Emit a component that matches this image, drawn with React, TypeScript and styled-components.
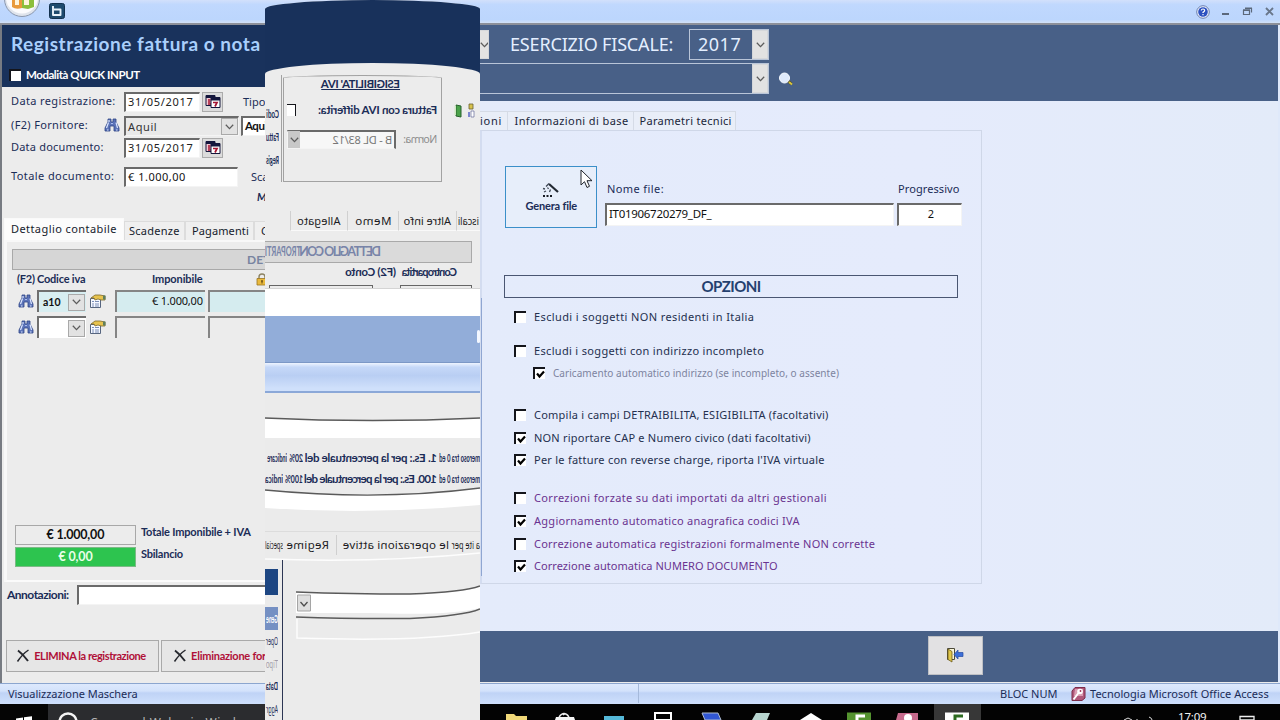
import React, { useLayoutEffect, useRef, useState } from 'react';
import styled, { createGlobalStyle, css } from 'styled-components';

const NAVY = '#1b2c57';

interface FitTextProps {
    w?: number;
    size?: number;
    color?: string;
    bold?: boolean;
    underline?: boolean;
    italic?: boolean;
    squeeze?: boolean;
    children: string;
}

const FitText: React.FC<FitTextProps> = ({ w, size = 11, color = NAVY, bold, underline, italic, squeeze, children }) => {
    const ref = useRef<HTMLSpanElement>(null);
    const [fit, setFit] = useState<React.CSSProperties>({});

    useLayoutEffect(() => {
        if (!w || !ref.current) return;
        const natural = ref.current.offsetWidth;
        if (squeeze) {
            setFit({ transform: `scaleX(${w / natural})` });
        } else {
            setFit({ letterSpacing: `${(w - natural) / children.length}px` });
        }
    }, []);

    return (
        <TextBox $w={w} $size={size} $color={color} $bold={bold} $underline={underline} $italic={italic}>
            <TextRun ref={ref} style={fit}>{children}</TextRun>
        </TextBox>
    );
};

const Binoculars = () => (
    <svg width="16" height="14" viewBox="0 0 16 14">
        <path d="M4 1h3v3h2V1h3v3l3 6v3h-5V8H6v5H1v-3l3-6z" fill="#5b73b8" stroke="#2f4585" strokeWidth=".8" />
        <path d="M4.5 4.5 2.5 10M12 4.5l1.5 5.5M3 12h1.5M12 12h1.5M5 2v2" stroke="#dce6ff" strokeWidth="1.2" />
        <path d="M7 5.5h2" stroke="#a9bbf0" />
    </svg>
);

const Properties = () => (
    <svg width="17" height="15" viewBox="0 0 17 15">
        <path d="M1.5 4.5h10v9h-10z" fill="#f5f8ff" stroke="#56657f" />
        <path d="M3 7.5h2M6 7.5h4M3 10h2M6 10h4M3 12h2M6 12h4" stroke="#7a8eb8" />
        <path d="M2 4 6 1h5l5 1v4h-4L9 5 6 6 5 4z" fill="#e7c34e" stroke="#7e6a2c" strokeWidth=".8" />
        <path d="M14 1.5h2.5v4H14z" fill="#5f7f5d" />
    </svg>
);

const CalendarIcon = () => (
    <svg width="18" height="18" viewBox="0 0 18 18">
        <path d="M2 2.500h9v10H2z" fill="#f3c9d2" stroke="#14163c" />
        <path d="M2 2h9v3H2z" fill="#14163c" />
        <path d="M4 7h2.500M4 9h2.500M4 11h3" stroke="#a51432" strokeWidth="1.300" fill="none" />
        <path d="M7 4.500h9v10H7z" fill="#fff" stroke="#14163c" />
        <path d="M7 4h9v3.500H7z" fill="#14163c" />
        <path d="M9 9.500h4L11 13.500" stroke="#a51432" strokeWidth="1.700" fill="none" />
    </svg>
);

const Chevron = () => (
    <svg width="9" height="6" viewBox="0 0 9 6">
        <path d="M.8.8 4.5 4.6 8.2.8" fill="none" stroke="#5d5d5d" strokeWidth="1.3" />
    </svg>
);

const Cross = () => (
    <svg width="14" height="14" viewBox="0 0 14 14">
        <path d="M2 1.5c4 3 7 6.500 10 10.500" stroke="#26282e" strokeWidth="2" fill="none" />
        <path d="M12.500 1C8 4 4.500 8 1.500 12.500" stroke="#26282e" strokeWidth="1.500" fill="none" />
    </svg>
);

const Padlock = () => (
    <svg width="12" height="13" viewBox="0 0 12 13">
        <path d="M3 6V4a3 3 0 0 1 6 0v2" fill="none" stroke="#8d8465" strokeWidth="1.4" />
        <path d="M1 5.500h10V12H1z" fill="#e9b93d" stroke="#9b7420" strokeWidth=".8" />
        <path d="M6 7.500v3M5 8h2" stroke="#5d4510" />
    </svg>
);

const OfficeButton = () => (
    <svg width="40" height="24" viewBox="0 0 40 24">
        <circle cx="20" cy="-1" r="17.500" fill="#dfe4ec" stroke="#8a97ae" />
        <circle cx="20" cy="-2.500" r="16" fill="#fbfbfd" />
        <path d="M10 0h10v8q-6 2-10-1z" fill="#e99a3c" />
        <path d="M20 0h12v7l-6 2-6-1z" fill="#8cbf3c" />
        <path d="M13 0h4v5h-4zM22 0h5v5h-5z" fill="#fff5dc" />
    </svg>
);

const BLogo = () => (
    <svg width="16" height="16" viewBox="0 0 16 16">
        <rect x=".5" y=".5" width="15" height="15" rx="2" fill="#1d4a6e" stroke="#12314f" />
        <path d="M4 3v9h7.500V6.500H5" fill="none" stroke="#e8f2fb" strokeWidth="1.900" strokeLinejoin="round" />
    </svg>
);

const HelpIcon = () => (
    <svg width="14" height="14" viewBox="0 0 14 14">
        <circle cx="7" cy="7" r="6.300" fill="#eef3fd" stroke="#6b7fae" />
        <circle cx="7" cy="7" r="4.800" fill="#2b50c0" />
        <path d="M5.200 5.500Q5.500 4 7 4t1.700 1.300Q8.700 6.500 7 7.400V8M7 9v1.300" fill="none" stroke="#fff" strokeWidth="1.200" />
    </svg>
);

const WindowControls = () => (
    <svg width="54" height="12" viewBox="0 0 54 12">
        <path d="M0 8h7" stroke="#5b687b" strokeWidth="2" />
        <path d="M21.500 4.500h6v4h-6zM23.500 2.500h6v4" fill="none" stroke="#5b687b" strokeWidth="1.200" />
        <path d="M21 4h7M23 2.200h7" stroke="#5b687b" strokeWidth="1.500" />
        <path d="M44 2l7 7M51 2l-7 7" stroke="#68768a" strokeWidth="1.900" />
    </svg>
);

const Lens = () => (
    <svg width="16" height="16" viewBox="0 0 16 16">
        <path d="m9 9 4.500 4" stroke="#4a4527" strokeWidth="3" />
        <path d="m11 11 3 2.500" stroke="#d8c53c" strokeWidth="2" />
        <circle cx="6.500" cy="7" r="5" fill="#dfeafb" stroke="#f6faff" />
    </svg>
);

const Wand = () => (
    <svg width="18" height="17" viewBox="0 0 18 17">
        <path d="m7 2 9 8" stroke="#222831" strokeWidth="2.200" />
        <path d="M7 1.500 4 4.500M1 6.500l2 .5M5.500 5.500l1 1.500M2 10l2-1M8.500 7.500 7.500 10" stroke="#414a57" strokeWidth="1.300" />
        <path d="M1 14h2M4.500 14h2M8 14h2" stroke="#161a22" strokeWidth="2.200" />
    </svg>
);

const Pointer = () => (
    <svg width="13" height="20" viewBox="0 0 13 20">
        <path d="M1 1v15l3.500-3.300L7 18.500l2.500-1.200L7 11.700h5z" fill="#fff" stroke="#20242c" strokeWidth="1" />
    </svg>
);

const ExitDoor = () => (
    <svg width="18" height="16" viewBox="0 0 18 16">
        <path d="M1.500 1.500h7v11h-7z" fill="#faf6d8" stroke="#4c4a3b" />
        <path d="M2 2 6 4.500V15l-4-2.500z" fill="#dfc64b" stroke="#6c5c1b" strokeWidth=".8" />
        <path d="M8 7.500 12 3v2.500h5v4h-5V12z" fill="#3d6fd8" stroke="#254aa0" strokeWidth=".7" />
    </svg>
);

const AccessLogo = () => (
    <svg width="15" height="16" viewBox="0 0 15 16">
        <path d="M4 1.500h10V12l-3 2.500H1V5z" fill="#b0587a" stroke="#7c2c49" />
        <path d="M4 3h8v7H3z" fill="#d99db2" />
        <circle cx="9" cy="5.500" r="2.800" fill="#fff" />
        <circle cx="9.500" cy="5" r=".9" fill="#a03458" />
        <path d="m7.500 7-5 6.500" stroke="#fff" strokeWidth="2" />
    </svg>
);

const GreenBook = () => (
    <svg width="8" height="14" viewBox="0 0 8 14">
        <path d="M1 2 6 1v11l-5 1z" fill="#4ba24a" stroke="#27602c" />
        <path d="M6 1.500h1.500V11H6z" fill="#cfe8c4" />
    </svg>
);

const Sheets = () => (
    <svg width="8" height="16" viewBox="0 0 8 16">
        <path d="M2 1h4v5H2z" fill="#d9c24a" stroke="#6b6330" strokeWidth=".8" />
        <path d="M1 8h3v6H1z" fill="#fff" stroke="#4d558c" strokeWidth=".6" />
        <path d="M5 9h2v5H5z" fill="#7d86cf" />
    </svg>
);

const TaskIcons = () => (
    <svg width="800" height="16" viewBox="0 0 800 16">
        <path d="M454 0h47v16h-47z" fill="#373737" />
        <path d="M26 10h8l2 2h11v4H26z" fill="#f0d878" />
        <path d="M75 16l1-3h18l1 3z" fill="#f5f5f5" />
        <path d="M79 13q5-7 10 0M83 11q4-3 6 2" fill="none" stroke="#ededed" strokeWidth="1.300" />
        <path d="M124 12h20v4h-20z" fill="#55b8d8" />
        <path d="M175 9h16v7h-16z" fill="none" stroke="#fff" strokeWidth="2" />
        <path d="M222 9h16l3 7h-16z" fill="#3157d3" stroke="#aebccf" />
        <path d="M276 9h14l-3 7h-15z" fill="#b7d5cf" />
        <path d="M320 16l11-7 11 7z" fill="#fff" />
        <path d="M367 8.500h24V16h-24z" fill="#54932f" />
        <path d="M385 12h-8v4" fill="none" stroke="#fff" strokeWidth="3" />
        <path d="M418 9h20v7h-22z" fill="#c66a8c" />
        <circle cx="428" cy="14" r="4" fill="#fff" />
        <path d="M465 8.500h24V16h-24z" fill="#fff" />
        <path d="M483 12h-8v4" fill="none" stroke="#2c6a20" strokeWidth="3" />
        <path d="M644 16l4-2 4 2M657 15v1M669 13q3 1 3 3" stroke="#ddd" fill="none" />
        <path d="M760 12.500h14V16h-14z" fill="none" stroke="#eee" strokeWidth="1.300" />
    </svg>
);

const StartIcons = () => (
    <svg width="90" height="16" viewBox="0 0 90 16">
        <path d="M16 14.500l7-1v3h-7zM24 13.300l8-1v4h-8z" fill="#fff" />
        <circle cx="68" cy="18" r="8.500" fill="none" stroke="#f4f4f4" strokeWidth="2.500" />
    </svg>
);

const CurvedField = ({ h, top, bottom }: { h: number; top: string; bottom: string }) => (
    <svg width="215" height={h} viewBox={`0 0 215 ${h}`}>
        <path d={`${top} ${bottom} Z`} fill="#fff" />
        <path d={top} fill="none" stroke="#5a5a5a" strokeWidth="1.300" />
    </svg>
);

const Check = ({ on, small }: { on?: boolean; small?: boolean }) => (
    <CheckBox $small={small}>
        {on && (
            <svg width="9" height="9" viewBox="0 0 9 9">
                <path d="M1 3.500 3.500 6.500 8 1.500" fill="none" stroke="#000" strokeWidth="2.200" />
            </svg>
        )}
    </CheckBox>
);

interface OptionData {
    label: string;
    w: number;
    gap: number;
    on?: boolean;
    tone?: 'muted' | 'violet';
}

const options: OptionData[] = [
    { label: 'Escludi i soggetti NON residenti in Italia', w: 220, gap: 11 },
    { label: 'Escludi i soggetti con indirizzo incompleto', w: 230, gap: 18 },
    { label: 'Caricamento automatico indirizzo (se incompleto, o assente)', w: 286, gap: 6, on: true, tone: 'muted' },
    { label: 'Compila i campi DETRAIBILITA, ESIGIBILITA (facoltativi)', w: 295, gap: 26 },
    { label: 'NON riportare CAP e Numero civico (dati facoltativi)', w: 277, gap: 7, on: true },
    { label: "Per le fatture con reverse charge, riporta l'IVA virtuale", w: 291, gap: 6, on: true },
    { label: 'Correzioni forzate su dati importati da altri gestionali', w: 293, gap: 22, tone: 'violet' },
    { label: 'Aggiornamento automatico anagrafica codici IVA', w: 266, gap: 7, on: true, tone: 'violet' },
    { label: 'Correzione automatica registrazioni formalmente NON corrette', w: 341, gap: 7, tone: 'violet' },
    { label: 'Correzione automatica NUMERO DOCUMENTO', w: 244, gap: 6, on: true, tone: 'violet' },
];

const toneColor = { muted: '#7d84a0', violet: '#6a3390' };

const Registration = () => (
    <LeftPanel>
        <LeftHeader>
            <TitleLine><FitText w={249} size={19} bold color="#a9cffc">Registrazione fattura o nota</FitText></TitleLine>
            <QuickLine>
                <Check />
                <FitText w={114} size={11.500} bold color="#fff">Modalità QUICK INPUT</FitText>
            </QuickLine>
        </LeftHeader>
        <FormRow $h={24}>
            <LabelCell><FitText w={105}>Data registrazione:</FitText></LabelCell>
            <Field $w={76} $h={20}><FitText w={66} color="#222">31/05/2017</FitText></Field>
            <CalendarButton><CalendarIcon /></CalendarButton>
            <Spacer $w={20} />
            <FitText>Tipo</FitText>
        </FormRow>
        <FormRow $h={24}>
            <LabelCell>
                <FitText w={77}>(F2) Fornitore:</FitText>
                <Binoculars />
            </LabelCell>
            <Field $w={115} $h={20} $bg="#e9e9e9" $combo>
                <FitText w={29} color="#333">Aquil</FitText>
                <DropButton><Chevron /></DropButton>
            </Field>
            <Spacer $w={2} />
            <Field $w={40} $h={20}><FitText w={22} size={11.500} bold color="#111">Aqui</FitText></Field>
        </FormRow>
        <FormRow $h={20}>
            <LabelCell><FitText w={93}>Data documento:</FitText></LabelCell>
            <Field $w={76} $h={20}><FitText w={66} color="#222">31/05/2017</FitText></Field>
            <CalendarButton><CalendarIcon /></CalendarButton>
        </FormRow>
        <FormRow $h={22} $gap={8}>
            <LabelCell><FitText w={103}>Totale documento:</FitText></LabelCell>
            <Field $w={114} $h={20}><FitText w={58} color="#111">€ 1.000,00</FitText></Field>
            <Spacer $w={13} />
            <FitText>Sca</FitText>
        </FormRow>
        <FormRow $h={18}>
            <Spacer $w={246} />
            <FitText bold italic>M</FitText>
        </FormRow>
        <LeftTabs>
            <LeftTab $w={120} $active><FitText w={106} color="#151b2c">Dettaglio contabile</FitText></LeftTab>
            <LeftTab $w={61}><FitText w={51} color="#151b2c">Scadenze</FitText></LeftTab>
            <LeftTab $w={69}><FitText w={57} color="#151b2c">Pagamenti</FitText></LeftTab>
            <LeftTab $w={60}><FitText color="#151b2c">C</FitText></LeftTab>
        </LeftTabs>
        <TabPage>
            <SectionBar>
                <FitText size={12} bold color="#7884a0">DET</FitText>
            </SectionBar>
            <ColumnHeads>
                <FitText w={18} bold>(F2)</FitText>
                <FitText w={48} bold>Codice iva</FitText>
                <Spacer $w={63} />
                <FitText w={51} bold>Imponibile</FitText>
                <Spacer $w={49} />
                <Padlock />
            </ColumnHeads>
            <GridRow>
                <Binoculars />
                <CodeField $tinted>
                    <FitText w={18} size={10.500} bold color="#111">a10</FitText>
                    <DropButton><Chevron /></DropButton>
                </CodeField>
                <Properties />
                <Amount $tinted><FitText w={51} color="#111">€ 1.000,00</FitText></Amount>
                <Amount $tinted />
            </GridRow>
            <GridRow>
                <Binoculars />
                <CodeField><DropButton><Chevron /></DropButton></CodeField>
                <Properties />
                <Amount />
                <Amount />
            </GridRow>
            <Totals>
                <TotalRow>
                    <TotalBox><FitText w={58} size={12.500} bold color="#111">€ 1.000,00</FitText></TotalBox>
                    <FitText w={110} bold>Totale Imponibile + IVA</FitText>
                </TotalRow>
                <TotalRow>
                    <TotalBox $green><FitText w={34} size={12.500} bold color="#e9ffe9">€ 0,00</FitText></TotalBox>
                    <FitText w={42} bold>Sbilancio</FitText>
                </TotalRow>
            </Totals>
        </TabPage>
        <NotesRow>
            <FitText w={62} size={12} bold>Annotazioni:</FitText>
            <Field $w={200} $h={20} />
        </NotesRow>
        <DeleteRow>
            <DeleteButton $w={153}>
                <Cross />
                <FitText w={112} bold color="#b01038">ELIMINA la registrazione</FitText>
            </DeleteButton>
            <DeleteButton $w={153}>
                <Cross />
                <FitText w={75} bold color="#b01038">Eliminazione for</FitText>
            </DeleteButton>
        </DeleteRow>
    </LeftPanel>
);

const Export = () => (
    <RightPanel>
        <RightHeader>
            <YearRow>
                <DropButton $tall><Chevron /></DropButton>
                <Spacer $w={21} />
                <FitText w={163} size={18} color="#e4efff">ESERCIZIO FISCALE:</FitText>
                <Spacer $w={16} />
                <YearCombo $w={80}>
                    <FitText w={43} size={18} color="#e4efff">2017</FitText>
                    <DropButton $tall><Chevron /></DropButton>
                </YearCombo>
            </YearRow>
            <YearRow>
                <YearCombo $w={289} $open><DropButton $tall><Chevron /></DropButton></YearCombo>
                <Spacer $w={9} />
                <Lens />
            </YearRow>
        </RightHeader>
        <RightBody>
            <RightTabs>
                <RightTab $w={28}><FitText w={22} color="#20263a">ioni</FitText></RightTab>
                <RightTab $w={126}><FitText w={114} color="#20263a">Informazioni di base</FitText></RightTab>
                <RightTab $w={102}><FitText w={92} color="#20263a">Parametri tecnici</FitText></RightTab>
            </RightTabs>
            <OptionsPage>
                <FileRow>
                    <GenerateButton>
                        <Wand />
                        <FitText w={51} bold>Genera file</FitText>
                        <PointerSlot><Pointer /></PointerSlot>
                    </GenerateButton>
                    <FileField $w={289}>
                        <FitText w={57}>Nome file:</FitText>
                        <Field $w={289} $h={23}><FitText w={102} size={11.500} color="#111">IT01906720279_DF_</FitText></Field>
                    </FileField>
                    <FileField $w={65}>
                        <FitText w={62}>Progressivo</FitText>
                        <Field $w={65} $h={23} $center><FitText color="#111">2</FitText></Field>
                    </FileField>
                </FileRow>
                <OptionsTitle><FitText w={59} size={15} bold color="#24406f">OPZIONI</FitText></OptionsTitle>
                {options.map((o) => (
                    <Option key={o.label} $gap={o.gap} $indent={o.tone === 'muted'}>
                        <Check on={o.on} />
                        <FitText w={o.w} size={o.tone === 'muted' ? 10 : 11} color={o.tone ? toneColor[o.tone] : '#24304f'}>{o.label}</FitText>
                    </Option>
                ))}
            </OptionsPage>
        </RightBody>
        <RightFooter>
            <ExitButton><ExitDoor /></ExitButton>
        </RightFooter>
    </RightPanel>
);

const Fold = () => (
    <FoldSheet>
        <FoldCap />
        <FoldPage>
            <VatRow>
                <VatIcons><Sheets /><GreenBook /></VatIcons>
                <VatBox>
                    <VatTitle><FitText w={79} size={11.500} bold underline>ESIGIBILITA' IVA</FitText></VatTitle>
                    <VatLine $h={28}>
                        <FitText w={118} size={11.500} bold>Fattura con IVA differita:</FitText>
                        <Spacer $w={23} />
                        <Check small />
                    </VatLine>
                    <VatLine $h={30}>
                        <FitText w={33} size={10.500} color="#8d8d8d">Norma:</FitText>
                        <Spacer $w={8} />
                        <Field $w={109} $h={19} $bg="#f7f7f7" $combo>
                            <FitText w={59} color="#777">B - DL 83/12</FitText>
                            <DropButton $narrow><Chevron /></DropButton>
                        </Field>
                    </VatLine>
                </VatBox>
                <EdgeColumn>
                    <FitText w={13} squeeze bold>Codi</FitText>
                    <FitText w={13} squeeze bold>Fattu</FitText>
                    <FitText w={13} squeeze bold>Regis</FitText>
                </EdgeColumn>
            </VatRow>
            <FoldTabs>
                <FoldTab $w={24}><FitText w={21} squeeze color="#1c1c24">iscali</FitText></FoldTab>
                <FoldTab $w={58}><FitText w={47} color="#1c1c24">Altre info</FitText></FoldTab>
                <FoldTab $w={51}><FitText w={37} size={11.500} color="#1c1c24">Memo</FitText></FoldTab>
                <FoldTab $w={57}><FitText w={43} color="#1c1c24">Allegato</FitText></FoldTab>
            </FoldTabs>
            <CounterBar>
                <FitText w={80} size={12.500} bold color="#7884a8">DETTAGLIO CON</FitText>
                <FitText w={36} size={12.500} bold squeeze color="#7884a8">TROPARTI</FitText>
            </CounterBar>
            <CounterHeads>
                <FitText w={55} bold>Contropartita</FitText>
                <FitText w={51} size={11.500} bold>(F2) Conto</FitText>
            </CounterHeads>
            <CounterLines><CounterLine $w={72} /><CounterLine $w={104} /></CounterLines>
        </FoldPage>
        <WhiteBand />
        <BlueBand />
        <RibbonBand />
        <Spacer $h={24} />
        <CurvedField h={21} top="M0 1Q107 6 215 1" bottom="V21H0" />
        <FactorRow $gap={12}>
            <FitText w={41} bold squeeze>meroso tra 0 ed</FitText>
            <FitText w={132} size={11.500} bold>1. Es.: per la percentuale del</FitText>
            <FitText w={14} bold squeeze>20%</FitText>
            <FitText w={20} bold squeeze>indicare</FitText>
        </FactorRow>
        <FactorRow $gap={5}>
            <FitText w={41} bold squeeze>meroso tra 0 ed</FitText>
            <FitText w={132} size={11.500} bold>100. Es.: per la percentuale del</FitText>
            <FitText w={18} bold squeeze>100%</FitText>
            <FitText w={18} bold squeeze>indica</FitText>
        </FactorRow>
        <CurvedField h={25} top="M0 1Q100 14 215 3" bottom="V21Q107 28 0 18" />
        <RegimeTabs>
            <FitText w={28} size={11.500} squeeze color="#1c1c24">a ite per</FitText>
            <FitText w={106} size={11.500} color="#1c1c24">le operazioni attive</FitText>
            <TabDivider />
            <FitText w={43} size={11.500} color="#1c1c24">Regime</FitText>
            <FitText w={18} size={11.500} squeeze color="#1c1c24">special</FitText>
        </RegimeTabs>
        <PageEdge>
            <svg width="215" height="14" viewBox="0 0 215 14">
                <path d="M0 1Q100 11 215 7" fill="none" stroke="#fdfdfd" strokeWidth="1.500" />
            </svg>
        </PageEdge>
        <FoldBottom>
            <FoldFields>
                <svg width="184" height="60" viewBox="0 0 184 60">
                    <path d="M0 6Q16 12 70 14 130 14 184 12V33H110Q30 36 0 28z" fill="#fff" />
                    <path d="M0 6Q16 12 70 14 130 14 184 12M0 29Q16 36 70 38.500 130 39 184 37" fill="none" stroke="#5a5a5a" strokeWidth="1.500" />
                    <path d="M0 52Q60 62 183 58V39" fill="none" stroke="#fdfdfd" strokeWidth="1.500" />
                    <path d="M169.500 15h13v16h-13z" fill="#dedede" stroke="#a5a5a5" />
                    <path d="m172.500 22 3.500 4 3.500-4" fill="none" stroke="#4d4d4d" strokeWidth="1.300" />
                </svg>
            </FoldFields>
            <FoldMenu>
                <MenuHead />
                <MenuItem $active><FitText w={12} bold squeeze color="#fff">Gene</FitText></MenuItem>
                <MenuItem><FitText w={12} squeeze>Oper</FitText></MenuItem>
                <MenuItem><FitText w={12} squeeze color="#a09aa6">Tipo</FitText></MenuItem>
                <MenuItem><FitText w={12} squeeze bold>Data</FitText></MenuItem>
                <MenuItem><FitText w={12} squeeze>Aggr</FitText></MenuItem>
            </FoldMenu>
        </FoldBottom>
    </FoldSheet>
);

const App: React.FC = () => (
    <Screen>
        <GlobalStyle />
        <TitleBar>
            <OfficeButton />
            <BLogo />
            <TitleTools><HelpIcon /><WindowControls /></TitleTools>
        </TitleBar>
        <Workspace>
            <Registration />
            <Export />
        </Workspace>
        <StatusBar>
            <StatusCell $w={631}><FitText w={130}>Visualizzazione Maschera</FitText></StatusCell>
            <StatusRight>
                <FitText w={57}>BLOC NUM</FitText>
                <AccessGroup>
                    <AccessLogo />
                    <FitText w={179}>Tecnologia Microsoft Office Access</FitText>
                </AccessGroup>
            </StatusRight>
        </StatusBar>
        <Taskbar>
            <StartArea>
                <StartIcons />
                <SearchHint><FitText w={170} color="#b5b5b5" size={12}>Cerca nel Web e in Windows</FitText></SearchHint>
            </StartArea>
            <TaskArea>
                <TaskIcons />
                <Clock><FitText w={28} color="#f3f3f3" size={11.500}>17:09</FitText></Clock>
            </TaskArea>
        </Taskbar>
        <Fold />
    </Screen>
);

const GlobalStyle = createGlobalStyle`
  body {
    margin: 0;
    overflow: hidden;
    font-family: "Noto Sans", "Open Sans", sans-serif;
  }

  * {
    box-sizing: border-box;
  }

  svg {
    display: block;
    flex-shrink: 0;
  }
`;

const Screen = styled.div`
  position: relative;
  display: flex;
  flex-direction: column;
  width: 1280px;
  height: 720px;
  overflow: hidden;
  background-color: #ececec;
`;

const TextBox = styled.span<{ $w?: number; $size: number; $color: string; $bold?: boolean; $underline?: boolean; $italic?: boolean }>`
  display: inline-block;
  flex-shrink: 0;
  width: ${({ $w }) => ($w ? `${$w}px` : 'auto')};
  font-family: ${({ $bold }) => ($bold ? 'Lato, "Noto Sans", sans-serif' : 'inherit')};
  font-size: ${({ $size }) => $size}px;
  font-weight: ${({ $bold }) => ($bold ? 700 : 400)};
  font-style: ${({ $italic }) => ($italic ? 'italic' : 'normal')};
  text-decoration: ${({ $underline }) => ($underline ? 'underline' : 'none')};
  line-height: 14px;
  color: ${({ $color }) => $color};
  white-space: nowrap;
`;

const TextRun = styled.span`
  display: inline-block;
  text-decoration: inherit;
  transform-origin: left;
`;

const Spacer = styled.div<{ $w?: number; $h?: number }>`
  flex-shrink: 0;
  width: ${({ $w }) => $w ?? 0}px;
  height: ${({ $h }) => $h ?? 0}px;
`;

const TitleBar = styled.div`
  display: flex;
  gap: 7px;
  height: 25px;
  padding: 0 4px 0 2px;
  background: linear-gradient(#d2e0fb, #c0d8fe 20%, #bcd6fd 85%, #d3e1f5);
  border-bottom: 2px solid #8d9099;

  & > svg:nth-child(2) {
    margin-top: 3px;
  }
`;

const TitleTools = styled.div`
  display: flex;
  align-items: center;
  gap: 12px;
  margin-left: auto;
`;

const Workspace = styled.div`
  display: flex;
  justify-content: space-between;
  height: 658px;
`;

const LeftPanel = styled.div`
  display: flex;
  flex-direction: column;
  width: 267px;
  overflow: hidden;
  border-left: 2px solid #777b82;
`;

const LeftHeader = styled.div`
  height: 62px;
  margin-bottom: 3px;
  padding-left: 7px;
  background-color: #19325c;
`;

const TitleLine = styled.div`
  display: flex;
  align-items: center;
  height: 38px;
  padding-left: 2px;
`;

const QuickLine = styled.div`
  display: flex;
  align-items: center;
  gap: 5px;
  height: 24px;
`;

const CheckBox = styled.span<{ $small?: boolean }>`
  display: flex;
  justify-content: center;
  align-items: center;
  flex-shrink: 0;
  width: ${({ $small }) => ($small ? 9 : 12)}px;
  height: 12px;
  border-top: ${({ $small }) => ($small ? 1 : 2)}px solid #14151b;
  border-left: ${({ $small }) => ($small ? 1 : 2)}px solid #14151b;
  background-color: #fff;
`;

const FormRow = styled.div<{ $h: number; $gap?: number }>`
  display: flex;
  align-items: center;
  height: ${({ $h }) => $h}px;
  margin-top: ${({ $gap }) => $gap ?? 0}px;
  padding-left: 9px;
`;

const LabelCell = styled.div`
  display: flex;
  justify-content: space-between;
  align-items: center;
  flex-shrink: 0;
  width: 113px;
  padding: 0 4px 2px 0;
`;

const Field = styled.div<{ $w: number; $h: number; $bg?: string; $combo?: boolean; $center?: boolean }>`
  display: flex;
  align-items: center;
  justify-content: ${({ $combo, $center }) => ($combo ? 'space-between' : $center ? 'center' : 'flex-start')};
  flex-shrink: 0;
  width: ${({ $w }) => $w}px;
  height: ${({ $h }) => $h}px;
  padding: 0 0 ${({ $combo }) => ($combo ? 0 : 2)}px 2px;
  border: 1px solid #f4f4f4;
  border-top: 2px solid #6a6a6a;
  border-left: 2px solid #6a6a6a;
  background-color: ${({ $bg }) => $bg ?? '#fff'};
`;

const DropButton = styled.span<{ $tall?: boolean; $narrow?: boolean }>`
  display: flex;
  justify-content: center;
  align-items: center;
  flex-shrink: 0;
  width: 17px;
  height: 17px;
  border: 1px solid #a9a9a9;
  background-color: #e2e2e2;

  ${({ $narrow }) => $narrow && css`
    width: 12px;
    border-color: #c8c8c8;
    background-color: #c8c8c8;
  `}

  ${({ $tall }) => $tall && css`
    width: 16px;
    height: 29px;
    border-color: #d5d7da;

    ${YearRow} > & {
      width: 9px;
      overflow: hidden;
      border-left: none;
    }
  `}
`;

const CalendarButton = styled.span`
  display: flex;
  justify-content: center;
  align-items: center;
  flex-shrink: 0;
  width: 21px;
  height: 20px;
  margin-left: 2px;
  border: 1px solid #ababab;
  background-color: #dcdcdc;
`;

const LeftTabs = styled.div`
  display: flex;
  align-items: flex-end;
  height: 22px;
  margin-top: 12px;
  padding-left: 2px;
  flex-shrink: 0;
`;

const LeftTab = styled.div<{ $w: number; $active?: boolean }>`
  display: flex;
  align-items: center;
  flex-shrink: 0;
  width: ${({ $w }) => $w}px;
  height: ${({ $active }) => ($active ? 22 : 19)}px;
  padding: ${({ $active }) => ($active ? '0 0 2px 6px' : '0 0 0 4px')};
  border: 1px solid ${({ $active }) => ($active ? '#fafafa' : '#dcdcdc')};
  border-bottom: none;
  background-color: ${({ $active }) => ($active ? '#fcfcfc' : '#efefef')};

  &:nth-child(n + 3) {
    padding-left: 6px;
  }
`;

const TabPage = styled.div`
  flex-shrink: 0;
  height: 342px;
  margin-left: 2px;
  padding: 7px 0 0 6px;
  border-left: 3px solid #f8f8f8;
  border-top: 2px solid #f8f8f8;
  border-bottom: 2px solid #fbfbfb;
`;

const SectionBar = styled.div`
  display: flex;
  align-items: center;
  width: 320px;
  height: 21px;
  padding-left: 234px;
  margin-left: -1px;
  border: 1px solid #a9a9a9;
  background-color: #d6d6d6;
`;

const ColumnHeads = styled.div`
  display: flex;
  align-items: center;
  gap: 2px;
  height: 18px;
  margin-bottom: 2px;
  padding-left: 4px;
`;

const GridRow = styled.div`
  display: flex;
  align-items: center;
  gap: 3px;
  height: 22px;
  margin-bottom: 4px;
  padding-left: 5px;
`;

const CodeField = styled.div<{ $tinted?: boolean }>`
  display: flex;
  justify-content: flex-end;
  align-items: center;
  gap: 7px;
  flex-shrink: 0;
  width: 49px;
  height: 22px;
  padding-right: 1px;
  border-top: 2px solid #6f6f6f;
  border-left: 2px solid #6f6f6f;
  background-color: ${({ $tinted }) => ($tinted ? '#d8eef1' : '#fff')};
`;

const Amount = styled.div<{ $tinted?: boolean }>`
  display: flex;
  justify-content: flex-end;
  align-items: center;
  flex-shrink: 0;
  width: 90px;
  height: 22px;
  margin-left: 6px;
  padding: 0 2px 2px 0;
  border-top: 2px solid #858585;
  border-left: 2px solid #858585;
  background-color: ${({ $tinted }) => ($tinted ? '#d5ecef' : '#ececec')};

  & + & {
    margin-left: 0;
  }
`;

const Totals = styled.div`
  display: flex;
  flex-direction: column;
  gap: 2px;
  margin-top: 187px;
  padding-left: 2px;
`;

const TotalRow = styled.div`
  display: flex;
  gap: 5px;
`;

const TotalBox = styled.div<{ $green?: boolean }>`
  display: flex;
  justify-content: center;
  align-items: center;
  flex-shrink: 0;
  width: 121px;
  height: 20px;
  padding-bottom: 1px;
  border: 1px solid ${({ $green }) => ($green ? '#7cba86' : '#a8a8a8')};
  background-color: ${({ $green }) => ($green ? '#2dc44f' : '#ececec')};
`;

const NotesRow = styled.div`
  display: flex;
  align-items: center;
  gap: 8px;
  flex-shrink: 0;
  height: 26px;
  padding-left: 5px;
`;

const DeleteRow = styled.div`
  display: flex;
  gap: 2px;
  flex-shrink: 0;
  margin-top: 32px;
  padding-left: 4px;
`;

const DeleteButton = styled.button<{ $w: number }>`
  display: flex;
  align-items: center;
  gap: 4px;
  flex-shrink: 0;
  width: ${({ $w }) => $w}px;
  height: 32px;
  padding: 0 0 0 9px;
  border: 1px solid #a9a9a9;
  background-color: #e6e6e6;
  font-family: inherit;

  & + & {
    padding-left: 11px;
  }
`;

const RightPanel = styled.div`
  display: flex;
  flex-direction: column;
  width: 800px;
  border-right: 2px solid #dfe9fa;
`;

const RightHeader = styled.div`
  display: flex;
  flex-direction: column;
  gap: 3px;
  flex-shrink: 0;
  height: 76px;
  padding-top: 4px;
  background-color: #486087;
`;

const YearRow = styled.div`
  display: flex;
  align-items: center;
  height: 31px;

  & > ${TextBox} {
    padding-bottom: 2px;
  }
`;

const YearCombo = styled.div<{ $w: number; $open?: boolean }>`
  display: flex;
  align-items: center;
  justify-content: ${({ $open }) => ($open ? 'flex-end' : 'space-between')};
  width: ${({ $w }) => $w}px;
  height: 31px;
  padding-left: 8px;
  border: 1px solid #b9c5d8;
  border-left-width: ${({ $open }) => ($open ? 0 : 1)}px;

  & > ${TextBox} {
    padding-bottom: 2px;
  }
`;

const RightBody = styled.div`
  flex-shrink: 0;
  height: 530px;
  padding-top: 10px;
  background: linear-gradient(90deg, #e4ebfb, #e5ebfc 55%, #e3ebf9);
`;

const RightTabs = styled.div`
  display: flex;
  height: 19px;
`;

const RightTab = styled.div<{ $w: number }>`
  display: flex;
  justify-content: center;
  align-items: center;
  width: ${({ $w }) => $w}px;
  padding-left: 2px;
  border: 1px solid #d5dbe6;
  border-left: none;
  border-bottom: none;
  background-color: #e9eef8;

  &:first-child {
    padding: 0 5px 0 0;
  }
`;

const OptionsPage = styled.div`
  position: relative;
  width: 502px;
  height: 454px;
  padding: 36px 0 0 22px;
  border: 1px solid #cfd7e8;
  border-left: 2px solid #d3dcf0;

  &::before {
    content: "";
    position: absolute;
    top: 167px;
    left: -1px;
    width: 1px;
    height: 278px;
    background-color: #8fa6d2;
  }
`;

const FileRow = styled.div`
  display: flex;
  height: 62px;
`;

const GenerateButton = styled.div`
  position: relative;
  display: flex;
  flex-direction: column;
  align-items: center;
  width: 92px;
  height: 62px;
  margin: -1px 8px 0 1px;
  padding-top: 15px;
  border: 1px solid #3b8fc9;
  background-color: #e7eefa;
`;

const PointerSlot = styled.span`
  position: absolute;
  top: 2px;
  left: 74px;
`;

const FileField = styled.div<{ $w: number }>`
  width: ${({ $w }) => $w}px;
  margin-right: 3px;
  padding-top: 15px;

  & > ${TextBox} {
    display: block;
    height: 21px;
    margin-left: 2px;
  }

  &:last-child > ${TextBox} {
    margin-left: 1px;
  }
`;

const OptionsTitle = styled.div`
  display: flex;
  justify-content: center;
  align-items: center;
  width: 454px;
  height: 23px;
  margin-top: 46px;
  padding-bottom: 1px;
  border: 1px solid #4a5672;
`;

const Option = styled.div<{ $gap: number; $indent?: boolean }>`
  display: flex;
  align-items: center;
  gap: 8px;
  height: 16px;
  margin-top: ${({ $gap }) => $gap}px;
  padding-left: ${({ $indent }) => ($indent ? 29 : 10)}px;
`;

const RightFooter = styled.div`
  flex-shrink: 0;
  height: 51px;
  padding: 5px 0 0 448px;
  background-color: #486087;
`;

const ExitButton = styled.div`
  display: flex;
  justify-content: center;
  align-items: center;
  width: 55px;
  height: 39px;
  padding: 0 2px 2px 0;
  border: 1px solid #bfc0c4;
  background-color: #e2e1e3;
`;

const StatusBar = styled.div`
  display: flex;
  align-items: center;
  height: 21px;
  padding-bottom: 1px;
  border-top: 1px solid #8ca6cf;
  background: linear-gradient(#dde9fd, #d3e2fb 35%, #bfd3f6 45%, #cfe0fc);
`;

const StatusCell = styled.div<{ $w: number }>`
  display: flex;
  align-items: center;
  height: 100%;
  width: ${({ $w }) => $w + 8}px;
  padding-left: 8px;
  border-right: 1px solid #a5b9da;
`;

const StatusRight = styled.div`
  display: flex;
  align-items: center;
  gap: 14px;
  margin-left: auto;
  padding-right: 11px;
`;

const AccessGroup = styled.div`
  display: flex;
  align-items: center;
  gap: 4px;
`;

const Taskbar = styled.div`
  display: flex;
  justify-content: space-between;
  height: 16px;
  overflow: hidden;
  background-color: #030303;
`;

const StartArea = styled.div`
  display: flex;
  width: 265px;
  overflow: hidden;
  background: linear-gradient(90deg, #050505 48px, #2b2c2f 48px);
`;

const SearchHint = styled.div`
  padding-top: 10px;
  line-height: 14px;
`;

const TaskArea = styled.div`
  position: relative;
  width: 800px;
`;

const Clock = styled.div`
  position: absolute;
  top: 4px;
  left: 698px;
  line-height: 14px;
`;

// The turning page is seen from behind, so everything in it is mirrored
const FoldSheet = styled.div`
  position: absolute;
  top: 0;
  left: 265px;
  display: flex;
  flex-direction: column;
  width: 215px;
  height: 720px;
  overflow: hidden;
  border-radius: 50% 50% 0 0 / 9px 9px 0 0;
  background-color: #ebebeb;
  transform: scaleX(-1);
`;

const FoldCap = styled.div`
  flex-shrink: 0;
  height: 76px;
  margin-bottom: -13px;
  background-color: #18315b;
`;

const FoldPage = styled.div`
  position: relative;
  flex-shrink: 0;
  height: 225px;
  padding-top: 12px;
  border-radius: 50% 50% 0 0 / 11px 11px 0 0;
  background-color: #ececec;
`;

const VatRow = styled.div`
  display: flex;
  height: 107px;
`;

const VatIcons = styled.div`
  display: flex;
  align-items: center;
  gap: 5px;
  width: 38px;
  height: 72px;
  padding-left: 5px;
`;

const VatBox = styled.div`
  width: 160px;
  border: 1px solid #a2a2a2;
  border-radius: 50% 50% 0 0 / 3px 3px 0 0;
`;

const VatTitle = styled.div`
  display: flex;
  justify-content: center;
  padding: 1px 0 5px 4px;
`;

const VatLine = styled.div<{ $h: number }>`
  display: flex;
  align-items: center;
  height: ${({ $h }) => $h}px;
  padding-left: 4px;
`;

const EdgeColumn = styled.div`
  display: flex;
  flex-direction: column;
  gap: 9px;
  width: 17px;
  margin-left: 1px;
  padding: 32px 0 0 2px;
  border-left: 1px solid #a2a2a2;
`;

const FoldTabs = styled.div`
  display: flex;
  height: 20px;
  margin-top: 29px;
`;

const FoldTab = styled.div<{ $w: number }>`
  display: flex;
  justify-content: center;
  align-items: center;
  width: ${({ $w }) => $w}px;
  border-right: 1px solid #d0d0d0;
  border-bottom: 1px solid #f9f9f9;
`;

const CounterBar = styled.div`
  display: flex;
  align-items: center;
  height: 22px;
  margin: 10px 0 0 8px;
  padding-left: 90px;
  border: 1px solid #a9a9a9;
  border-right: none;
  background-color: #dadada;
`;

const CounterHeads = styled.div`
  display: flex;
  align-items: center;
  gap: 6px;
  height: 18px;
  padding-left: 23px;
`;

const CounterLines = styled.div`
  display: flex;
  gap: 27px;
  padding: 4px 0 0 8px;
`;

const CounterLine = styled.div<{ $w: number }>`
  width: ${({ $w }) => $w}px;
  height: 3px;
  border: 1px solid #666;
  border-bottom: none;
`;

const WhiteBand = styled.div`
  flex-shrink: 0;
  height: 28px;
  border-top: 1px solid #d4d4d4;
  background-color: #fff;
`;

const BlueBand = styled.div`
  position: relative;
  flex-shrink: 0;
  height: 46px;
  background-color: #92add9;

  &::before {
    content: "";
    position: absolute;
    top: 14px;
    left: 0;
    width: 3px;
    height: 13px;
    border-radius: 2px;
    background-color: #f3f7ff;
  }
`;

const RibbonBand = styled.div`
  flex-shrink: 0;
  height: 31px;
  border-top: 1px solid #7c98c6;
  border-bottom: 2px solid #8ba8d8;
  background: linear-gradient(#eef4ff, #c5d8f8 15%, #b9cef3 45%, #cfe0fb 90%);
`;

const FactorRow = styled.div<{ $gap: number }>`
  display: flex;
  align-items: center;
  gap: 2px;
  flex-shrink: 0;
  height: 16px;
  margin-top: ${({ $gap }) => $gap}px;
`;

const RegimeTabs = styled.div`
  display: flex;
  align-items: center;
  gap: 3px;
  flex-shrink: 0;
  height: 26px;
  margin-top: 19px;
  border-top: 1px solid #dcdcdc;
`;

const TabDivider = styled.div`
  flex-shrink: 0;
  width: 1px;
  height: 20px;
  margin: 0 4px 0 3px;
  background-color: #cfcfcf;
`;

const PageEdge = styled.div`
  flex-shrink: 0;
  margin: -5px 0 -6px;
`;

const FoldBottom = styled.div`
  display: flex;
  flex-shrink: 0;
  height: 160px;
`;

const FoldFields = styled.div`
  width: 198px;
  padding-top: 20px;
  border-right: 1px solid #2c3654;
`;

const FoldMenu = styled.div`
  display: flex;
  flex-direction: column;
  padding: 9px 0 0 4px;
`;

const MenuHead = styled.div`
  width: 13px;
  height: 27px;
  margin-bottom: 12px;
  background-color: #1d4682;
`;

const MenuItem = styled.div<{ $active?: boolean }>`
  display: flex;
  align-items: center;
  width: 13px;
  height: 23px;
  background-color: ${({ $active }) => ($active ? '#7590c3' : 'transparent')};
`;

export default App;
